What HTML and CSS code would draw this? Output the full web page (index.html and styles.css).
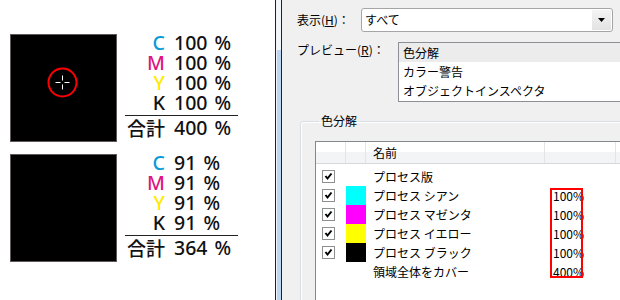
FILE: index.html
```html
<!DOCTYPE html>
<html lang="ja">
<head>
    <meta charset="UTF-8">
    <title>色分解プレビュー</title>
    <link rel="stylesheet" href="styles.css">
</head>
<body>
    <div class="viewer">
        <div class="sample">
            <div class="block">
                <div class="square">
                    <svg width="105" height="106" viewBox="0 0 105 106">
                        <circle cx="51.5" cy="47.5" r="14" fill="none" stroke="#ff0000" stroke-width="2"/>
                        <path d="M44.5 47.5h5M53.5 47.5h5M51.5 40.5v5M51.5 49.5v5" stroke="#fff" stroke-width="1"/>
                    </svg>
                </div>
                <div class="stats">
                    <span class="ink c">C</span><span>100 %</span>
                    <span class="ink m">M</span><span>100 %</span>
                    <span class="ink y">Y</span><span>100 %</span>
                    <span class="ink">K</span><span>100 %</span>
                    <div class="rule"></div>
                    <span class="ink total">合計</span><span>400 %</span>
                </div>
            </div>
            <div class="block">
                <div class="square"></div>
                <div class="stats">
                    <span class="ink c">C</span><span>91 %</span>
                    <span class="ink m">M</span><span>91 %</span>
                    <span class="ink y">Y</span><span>91 %</span>
                    <span class="ink">K</span><span>91 %</span>
                    <div class="rule"></div>
                    <span class="ink total">合計</span><span>364 %</span>
                </div>
            </div>
        </div>

        <div class="divider"></div>

        <div class="panel">
            <div class="field">
                <span class="label">表示(<u>H</u>)：</span>
                <div class="select">
                    <span class="value">すべて</span>
                    <span class="drop">
                        <svg width="7" height="4" viewBox="0 0 7 4"><path d="M0 0h7L3.5 4z" fill="#000"/></svg>
                    </span>
                </div>
            </div>
            <div class="field preview">
                <span class="label">プレビュー(<u>R</u>)：</span>
                <ul class="list">
                    <li class="current">色分解</li>
                    <li>カラー警告</li>
                    <li>オブジェクトインスペクタ</li>
                </ul>
            </div>

            <fieldset class="group">
                <legend>色分解</legend>
                <div class="table">
                    <div class="head">
                        <div class="col-check"></div>
                        <div class="col-swatch"></div>
                        <div class="col-name">名前</div>
                        <div class="col-pct"></div>
                        <div class="col-rest"></div>
                    </div>
                    <div class="rows">
                        <div class="row">
                            <div class="col-check"><span class="box"></span></div>
                            <div class="col-swatch"></div>
                            <div class="col-name">プロセス版</div>
                            <div class="col-pct"></div>
                        </div>
                        <div class="row">
                            <div class="col-check"><span class="box"></span></div>
                            <div class="col-swatch cyan"></div>
                            <div class="col-name">プロセス シアン</div>
                            <div class="col-pct">100%</div>
                        </div>
                        <div class="row">
                            <div class="col-check"><span class="box"></span></div>
                            <div class="col-swatch magenta"></div>
                            <div class="col-name">プロセス マゼンタ</div>
                            <div class="col-pct">100%</div>
                        </div>
                        <div class="row">
                            <div class="col-check"><span class="box"></span></div>
                            <div class="col-swatch yellow"></div>
                            <div class="col-name">プロセス イエロー</div>
                            <div class="col-pct">100%</div>
                        </div>
                        <div class="row">
                            <div class="col-check"><span class="box"></span></div>
                            <div class="col-swatch black"></div>
                            <div class="col-name">プロセス ブラック</div>
                            <div class="col-pct">100%</div>
                        </div>
                        <div class="row">
                            <div class="col-check"></div>
                            <div class="col-swatch"></div>
                            <div class="col-name">領域全体をカバー</div>
                            <div class="col-pct">400%</div>
                        </div>
                        <div class="mark"></div>
                    </div>
                </div>
            </fieldset>
        </div>
    </div>
</body>
</html>
```

FILE: styles.css
```css
body {
    margin: 0;
    width: 620px;
    height: 300px;
    overflow: hidden;
    background-color: white;
}
.viewer {
    display: flex;
    height: 300px;
}

/* left: sample swatches */
.sample {
    width: 275px;
    flex: none;
    padding: 34px 0 0 10px;
    box-sizing: border-box;
    background-color: white;
}
.block {
    display: flex;
    align-items: flex-start;
    gap: 8px;
    margin-bottom: 12px;
}
.square {
    width: 107px;
    height: 108px;
    box-sizing: border-box;
    background-color: black;
    border: 1px solid #5e5858;
}
.square svg {
    display: block;
}
.stats {
    margin-top: -1px;
    width: 113px;
    display: grid;
    grid-template-columns: 40px 1fr;
    grid-template-rows: repeat(4, 20px) 5px 20px;
    column-gap: 9px;
    font-family: "Noto Sans", "Noto Sans CJK JP", sans-serif;
    font-size: 19.5px;
    font-weight: 500;
    line-height: 20px;
    word-spacing: 2px;
    color: #111;
    white-space: nowrap;
}
.ink {
    text-align: right;
}
.ink.c { color: #0a9ad8; }
.ink.m { color: #e0137f; }
.ink.y { color: #ffea00; }
.ink.total {
    font-family: "Noto Sans CJK JP", sans-serif;
    font-size: 19px;
}
.rule {
    grid-column: 1 / -1;
    align-self: start;
    margin-top: 2px;
    height: 1px;
    background-color: #222;
}

/* window edge */
.divider {
    width: 7px;
    flex: none;
    box-sizing: border-box;
    border-left: 1px solid #1c2330;
    border-right: 1px solid #1c2330;
    background: linear-gradient(to right, #eef3f9 1px, transparent 1px),
                linear-gradient(to bottom, #f2f6fb 50px, #bcd6f2 50px);
}

/* right: dialog */
.panel {
    flex: 1;
    background-color: #f0f0f0;
    padding: 8px 0 0 15px;
    font-family: "Noto Sans CJK JP", sans-serif;
    font-size: 12px;
    line-height: 16px;
    color: #000;
    overflow: hidden;
}
.field {
    display: flex;
    align-items: center;
}
.field .label {
    flex: none;
    width: 64px;
    white-space: nowrap;
}
.select {
    width: 252px;
    height: 24px;
    box-sizing: border-box;
    border: 1px solid #a5a5a5;
    border-radius: 3px;
    background-color: white;
    display: flex;
    align-items: center;
    padding: 1px;
}
.select .value {
    flex: 1;
    padding-left: 2px;
}
.select .drop {
    width: 19px;
    height: 20px;
    display: flex;
    align-items: center;
    justify-content: center;
    background: linear-gradient(#f4f4f4, #e2e2e2);
}
.select .drop svg {
    display: block;
}
.preview {
    margin-top: 10px;
    align-items: flex-start;
}
.preview .label {
    width: 101px;
}
.list {
    list-style: none;
    margin: 0;
    padding: 0;
    width: 240px;
    height: 60px;
    box-sizing: border-box;
    border: 1px solid #8e8f95;
    background-color: white;
    flex: none;
}
.list li {
    height: 19px;
    line-height: 19px;
    padding-left: 4px;
}
.list li.current {
    background-color: #ececec;
}

.group {
    margin: 11px 0 0 3px;
    padding: 0 0 0 14px;
    width: 340px;
    height: 200px;
    border: 1px solid #d5dfe5;
    border-radius: 3px;
    box-shadow: inset 1px 1px 0 white;
}
.group legend {
    margin-left: 4px;
    padding: 0 2px;
    line-height: 16px;
}
.table {
    margin-top: 12px;
    width: 320px;
    height: 200px;
    border: 1px solid #828790;
    background-color: white;
}
.head {
    display: flex;
    height: 21px;
    border-bottom: 1px solid #d8d8d8;
    background: linear-gradient(white 50%, #f3f4f6 50%);
}
.head > div {
    border-right: 1px solid #e3e4e6;
    box-sizing: border-box;
    line-height: 21px;
}
.col-check { width: 30px; flex: none; box-sizing: border-box; }
.col-swatch { width: 20px; flex: none; box-sizing: border-box; }
.col-name { width: 179px; flex: none; padding-left: 7px; box-sizing: border-box; white-space: nowrap; }
.col-pct { width: 71px; flex: none; padding-left: 8px; box-sizing: border-box; }
.col-rest { flex: 1; }

.rows {
    position: relative;
    padding-top: 3px;
}
.row {
    display: flex;
    height: 19px;
    line-height: 19px;
}
.row .col-check {
    padding-left: 6px;
    display: flex;
    align-items: center;
}
.box {
    width: 13px;
    height: 13px;
    box-sizing: border-box;
    border: 1px solid #8e8f8f;
    background: white url("data:image/svg+xml;utf8,<svg xmlns='http://www.w3.org/2000/svg' width='11' height='11'><path d='M2.5 5l2 2.5L8.5 2.5' fill='none' stroke='black' stroke-width='2'/></svg>") no-repeat center;
}
.cyan { background-color: #00ffff; }
.magenta { background-color: #ff00ff; }
.yellow { background-color: #ffff00; }
.black { background-color: #000; }

.mark {
    position: absolute;
    left: 234px;
    top: 24px;
    width: 33px;
    height: 90px;
    box-sizing: border-box;
    border: 2px solid #ff0000;
}
```
